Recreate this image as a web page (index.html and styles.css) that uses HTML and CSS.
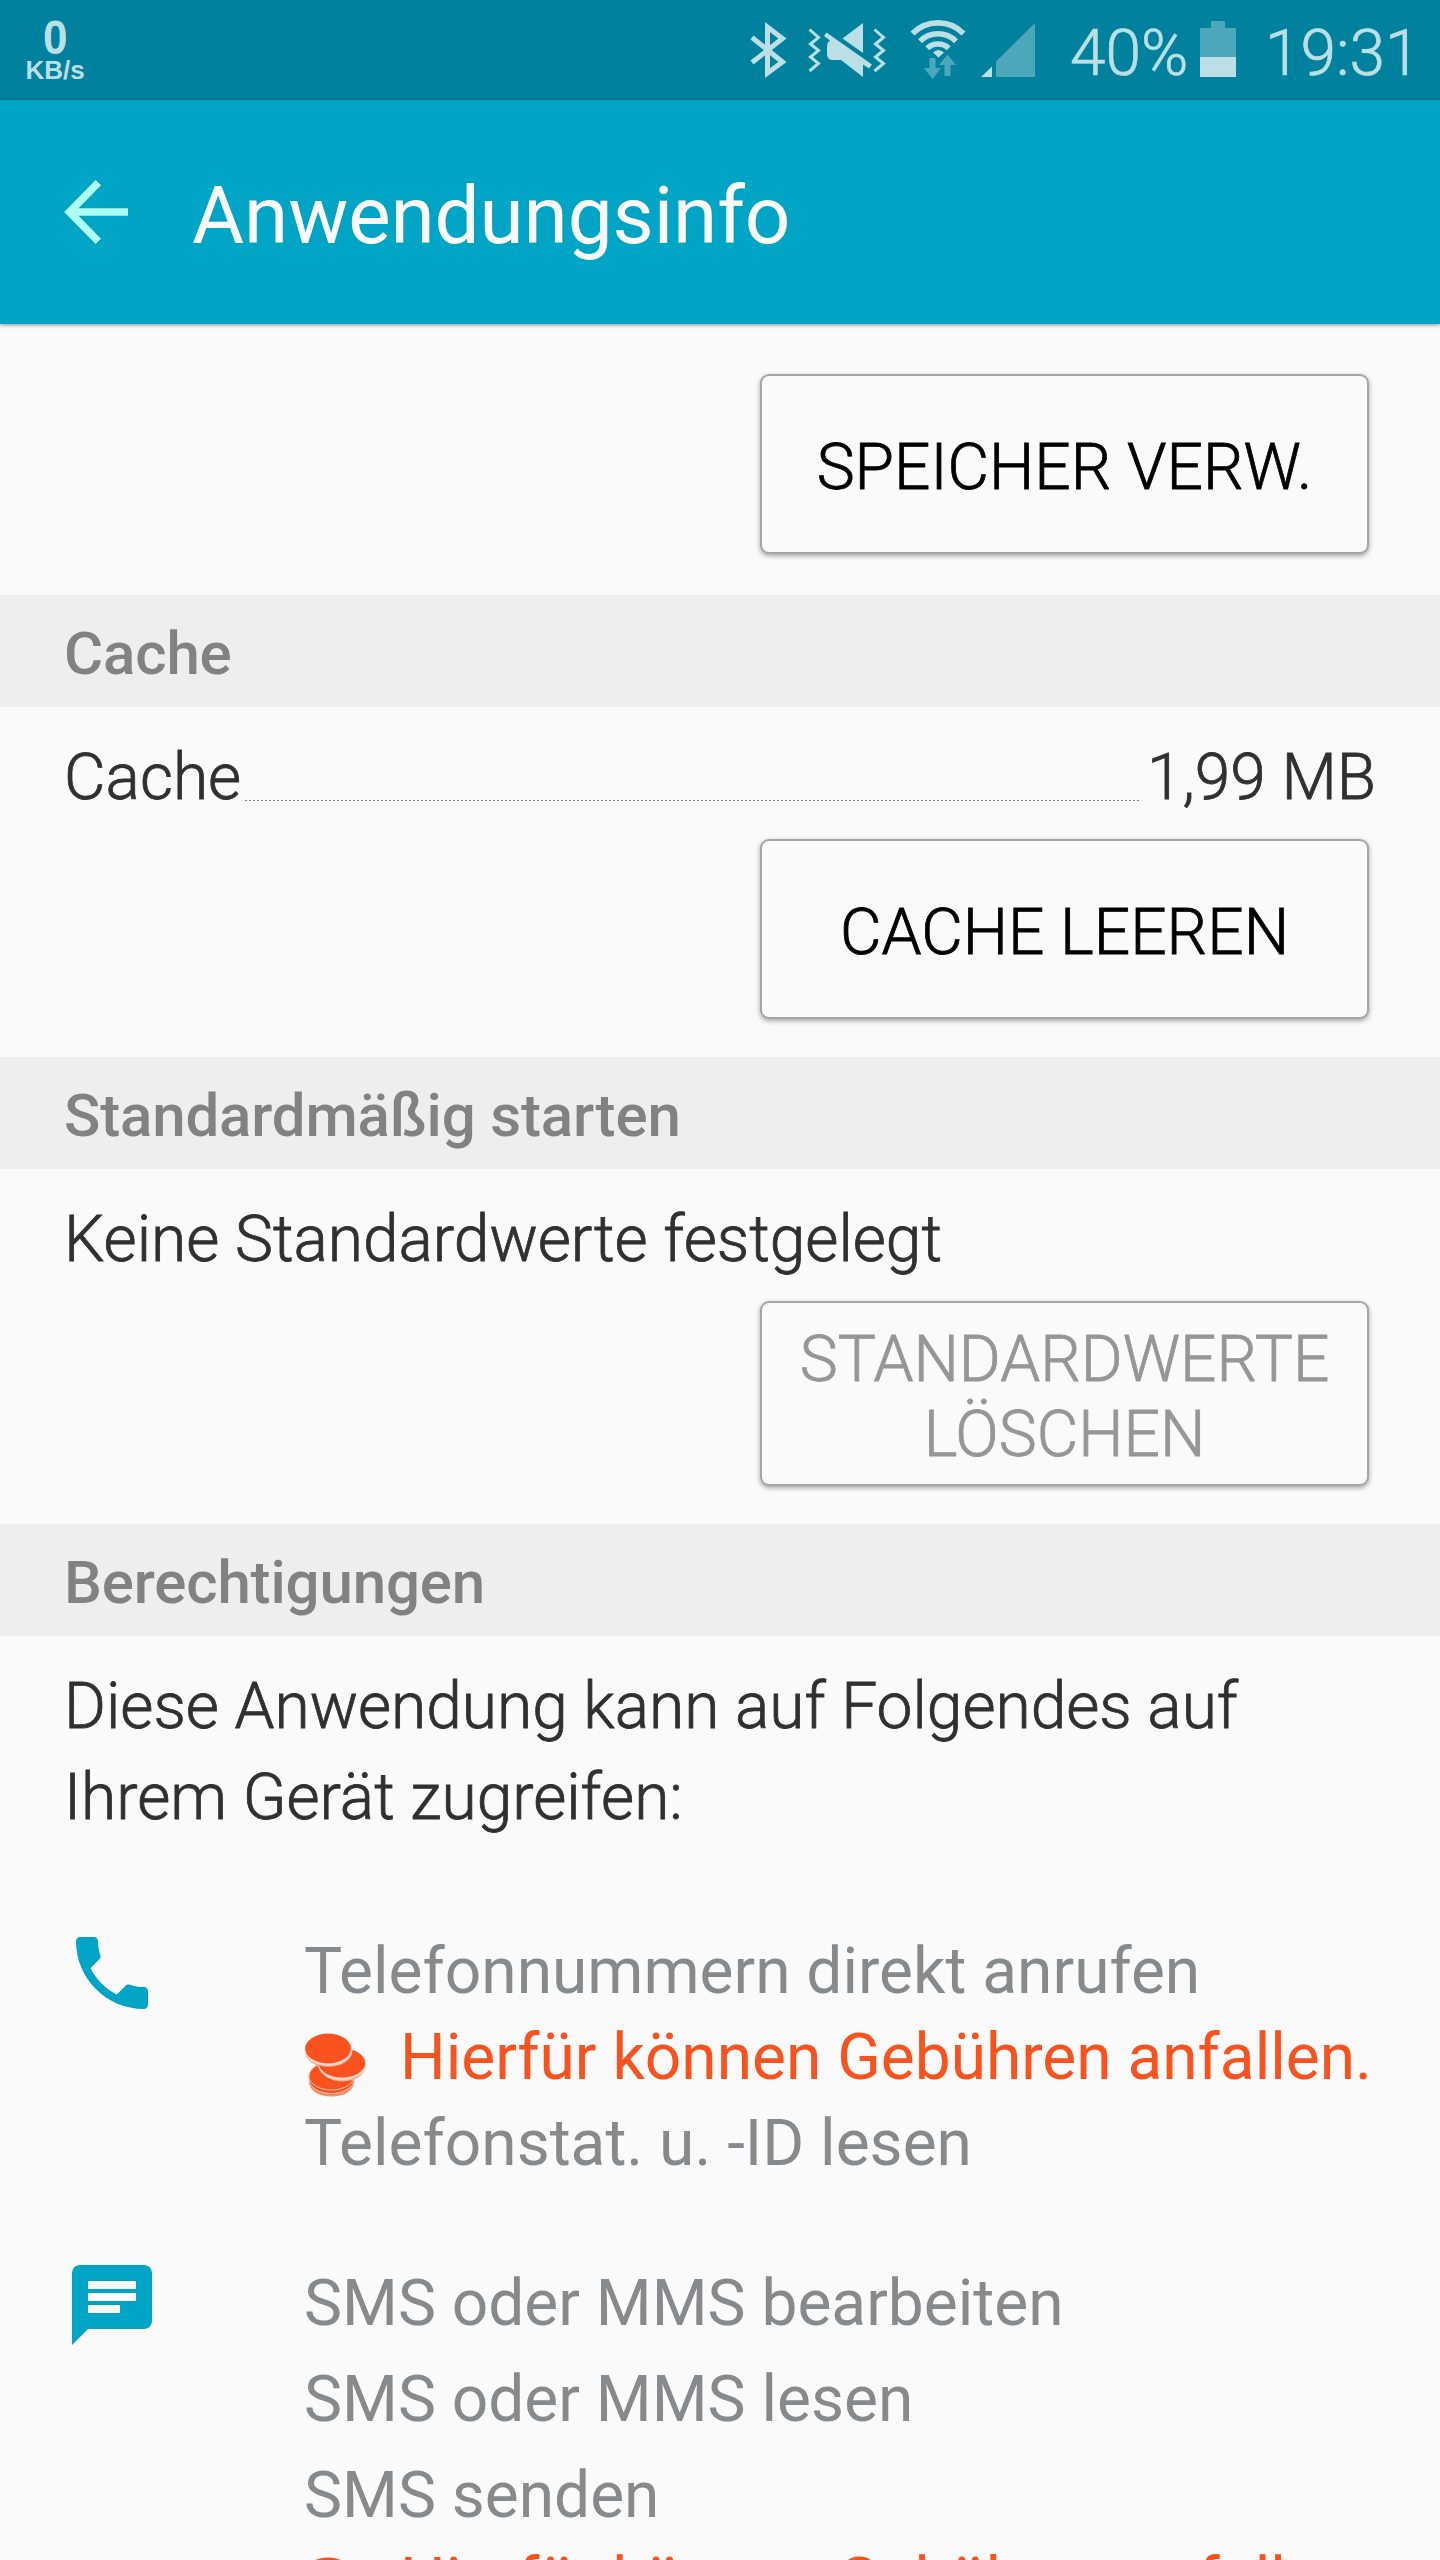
FILE: index.html
```html
<!DOCTYPE html>
<html lang="de">
<head>
<meta charset="utf-8">
<title>Anwendungsinfo</title>
<link rel="stylesheet" href="styles.css">
</head>
<body>
<div class="screen">
  <div class="statusbar">
    <div class="speed"><span class="speed-value">0</span><span class="speed-unit">KB/s</span></div>
    <svg class="status-icons" width="300" height="100" viewBox="0 0 300 100">
      <g fill="none" stroke="#bbdfe5" stroke-width="5">
        <path d="M22 37.500L52.500 62L37.500 73V27L52.500 38.500L22 62.500"/>
      </g>
      <g fill="none" stroke="#bbdfe5" stroke-width="3">
        <path d="M79.500 29.500L88.500 37.500L80.500 44L88.500 50.500L80.500 57L88.500 63.500L79.500 71"/>
        <path d="M144.500 29.500L153.500 37.500L145.500 44L153.500 50.500L145.500 57L153.500 63.500L144.500 71"/>
      </g>
      <path fill="#bbdfe5" d="M133 23V53L112.500 38.500ZM96.500 32.500L142 64.500L139 68.500L133 64.500V77L111 60H103Q97 60 97 54V47Q97 42 100 40.500L94 36Z"/>
      <g fill="none" stroke="#bbdfe5" stroke-width="5.700">
        <path d="M182.500 33.500A36 36 0 0 1 233.500 33.500"/>
        <path d="M190 41.200A25.500 25.500 0 0 1 226 41.200"/>
        <path d="M197.300 48.300A15.500 15.500 0 0 1 218.700 48.300"/>
      </g>
      <path fill="#bbdfe5" d="M203 52.500Q208.500 47.500 214 52.500L208.500 57.500Z"/>
      <path fill="#4ba7b9" d="M199.500 58H205.500V68H211L202.500 79L194 68H199.500ZM214.500 76V65H209L217.500 54.500L226 65H220.500V76Z"/>
      <path fill="#bbdfe5" d="M251 77L262 66.500V77Z"/>
      <path fill="#4ba7b9" d="M266 77V61.500L305 23V77Z"/>
    </svg>
    <span class="percent">40%</span>
    <svg class="battery" width="36" height="56" viewBox="0 0 36 56">
      <path fill="#4ba7b9" d="M0 7H11V0H25V7H36V36H0Z"/>
      <path fill="#bbdfe5" d="M0 36H36V56H0Z"/>
    </svg>
    <span class="clock">19:31</span>
  </div>
  <header class="appbar">
    <svg class="back" width="64" height="64" viewBox="0 0 64 64">
      <path fill="none" stroke="#b0fff5" stroke-width="7.600" d="M34.300 2.700L5.500 32L34.300 61.300M6 32H64"/>
    </svg>
    <h1 class="title">Anwendungsinfo</h1>
  </header>
  <main class="content">
    <div class="block block-storage"><button class="button">SPEICHER VERW.</button></div>

    <h2 class="section">Cache</h2>
    <div class="block block-cache">
      <div class="row"><span>Cache</span><span class="leader"></span><span>1,99 MB</span></div>
      <button class="button">CACHE LEEREN</button>
    </div>

    <h2 class="section">Standardmäßig starten</h2>
    <div class="block block-defaults">
      <div class="row">Keine Standardwerte festgelegt</div>
      <button class="button button-disabled">STANDARDWERTE<br>LÖSCHEN</button>
    </div>

    <h2 class="section">Berechtigungen</h2>
    <p class="intro">Diese Anwendung kann auf Folgendes auf<br>Ihrem Gerät zugreifen:</p>

    <div class="group group-phone">
      <svg class="group-icon" width="96" height="96" viewBox="0 0 24 24">
        <path fill="#00a5c6" d="M6.620 10.790c1.440 2.830 3.760 5.140 6.590 6.590l2.200-2.200c.270-.270.670-.360 1.020-.240 1.120.370 2.330.570 3.570.570.550 0 1 .450 1 1V20c0 .550-.450 1-1 1-9.390 0-17-7.610-17-17 0-.550.450-1 1-1h3.500c.550 0 1 .450 1 1 0 1.250.200 2.450.570 3.570.110.350.030.740-.250 1.020l-2.200 2.200z"/>
      </svg>
      <div class="perms">
        <div class="perm">Telefonnummern direkt anrufen</div>
        <div class="cost"><svg class="coins" width="62" height="66" viewBox="0 0 62 66"><use href="#coins"/></svg>Hierfür können Gebühren anfallen.</div>
        <div class="perm">Telefonstat. u. -ID lesen</div>
      </div>
    </div>

    <div class="group group-sms">
      <svg class="group-icon" width="96" height="96" viewBox="0 0 24 24">
        <path fill="#00a5c6" d="M20 2H4c-1.100 0-2 .900-2 2v18l4-4h14c1.100 0 2-.900 2-2V4c0-1.100-.900-2-2-2zM6 6h12v2H6zM6 9h12v2H6zM6 12h8v2H6z" fill-rule="evenodd"/>
      </svg>
      <div class="perms perms-wide">
        <div class="perm">SMS oder MMS bearbeiten</div>
        <div class="perm">SMS oder MMS lesen</div>
        <div class="perm">SMS senden</div>
        <div class="cost"><svg class="coins" width="62" height="66" viewBox="0 0 62 66"><use href="#coins"/></svg>Hierfür können Gebühren anfallen.</div>
      </div>
    </div>
  </main>
  <svg class="defs" width="0" height="0">
    <defs>
      <g id="coins" fill="#f8521e">
        <ellipse cx="27.500" cy="49.500" rx="22.500" ry="14" fill="#f98a66"/>
        <ellipse cx="27.500" cy="46.500" rx="22.500" ry="14" stroke="#fcc3b0"/>
        <ellipse cx="27.500" cy="43" rx="22.500" ry="14" stroke="#fcc3b0"/>
        <ellipse cx="38.500" cy="34" rx="22.500" ry="14.500" fill="#fa9b7b"/>
        <ellipse cx="38" cy="31.500" rx="24" ry="16" fill="#fdd5c8"/>
        <ellipse cx="38" cy="30" rx="23.200" ry="14.500"/>
        <ellipse cx="24.500" cy="18.500" rx="23.500" ry="15.500" fill="#fa9b7b"/>
        <ellipse cx="24.500" cy="17" rx="24" ry="16" fill="#fdd5c8"/>
        <ellipse cx="24" cy="15.500" rx="22.800" ry="15"/>
      </g>
    </defs>
  </svg>
</div>
</body>
</html>
```

FILE: styles.css
```css
* { box-sizing: border-box; }

body {
  margin: 0;
  background: #fafafa;
  font-family: Roboto, "Liberation Sans", sans-serif;
}

.screen {
  width: 1440px;
  height: 2560px;
  overflow: hidden;
  display: flex;
  flex-direction: column;
}

.statusbar {
  flex: none;
  height: 100px;
  background: #00829e;
  color: #bbdfe5;
  display: flex;
  font-size: 64px;
  line-height: 108px;
  font-weight: 300;
  -webkit-text-stroke: 0.7px;
}

.speed {
  width: 110px;
  flex: none;
  display: flex;
  flex-direction: column;
  align-items: center;
  padding-top: 16px;
  font-family: "Liberation Sans", sans-serif;
  font-weight: 700;
  -webkit-text-stroke: 0;
}

.speed-value { font-size: 48px; line-height: 44px; transform: scaleX(0.92); }
.speed-unit { font-size: 26px; line-height: 20px; }

.status-icons { margin-left: 620px; flex: none; overflow: visible; }
.percent { margin-left: 40px; width: 130px; flex: none; }
.battery { margin-top: 21px; flex: none; }
.clock { margin-left: 29px; }

.appbar {
  flex: none;
  height: 224px;
  background: #00a5c6;
  box-shadow: 0 1px 4px rgba(0, 0, 0, 0.45);
  display: flex;
  position: relative;
  padding-left: 64px;
}

.back { margin-top: 80px; }

.title {
  margin: 0 0 0 64px;
  font-size: 80px;
  font-weight: 400;
  line-height: 94px;
  letter-spacing: -0.1px;
  padding-top: 69px;
  color: #fafafa;
}

.content { flex: none; }

.block {
  padding: 0 71px 0 64px;
  display: flex;
  flex-direction: column;
  align-items: flex-end;
  font-size: 64px;
  font-weight: 300;
  color: #303030;
  -webkit-text-stroke: 0.8px;
}

.block-storage { height: 271px; padding-top: 50px; }
.block-cache { height: 350px; padding-top: 33px; }
.block-defaults { height: 355px; padding-top: 33px; }

.row {
  height: 99px;
  line-height: 75px;
  align-self: stretch;
  display: flex;
  margin-right: -7px;
}

.leader {
  flex: 1;
  height: 1px;
  margin: 60px 6px 0 4px;
  background: repeating-linear-gradient(90deg, #808080 0 2px, transparent 2px 4px);
}

.button {
  width: 609px;
  height: 180px;
  padding: 6px 0 0;
  border: 2px solid #a6a6a6;
  border-radius: 9px;
  background: #fafafa;
  box-shadow: 0 2px 5px rgba(0, 0, 0, 0.35);
  color: #000;
  font: 300 64px/75px Roboto, "Liberation Sans", sans-serif;
  -webkit-text-stroke: 0.8px;
}

.button-disabled { height: 185px; color: #969696; }

.section {
  margin: 0;
  height: 112px;
  padding-left: 64px;
  background: #eee;
  color: #828282;
  font-size: 60px;
  font-weight: 500;
  letter-spacing: -0.15px;
  line-height: 118px;
}

.intro {
  margin: 0;
  height: 284px;
  padding: 25px 64px 0;
  color: #303030;
  font-size: 64px;
  font-weight: 300;
  line-height: 91px;
  -webkit-text-stroke: 0.8px;
}

.group { display: flex; font-size: 64px; padding-left: 64px; }
.group-phone { height: 337px; padding-top: 5px; }
.group-icon { flex: none; }
.perms { margin-left: 144px; padding-top: 4px; line-height: 86px; color: #868a8d; white-space: nowrap; }
.perms-wide { margin-top: -1px; padding-top: 0; }
.perms-wide .perm { line-height: 96px; }
.perms-wide .cost { margin-top: -5px; }
.cost { display: flex; color: #f8521e; line-height: 86px; }
.coins { flex: none; margin: 18px 34px 0 0; }
.defs { display: none; }
```
